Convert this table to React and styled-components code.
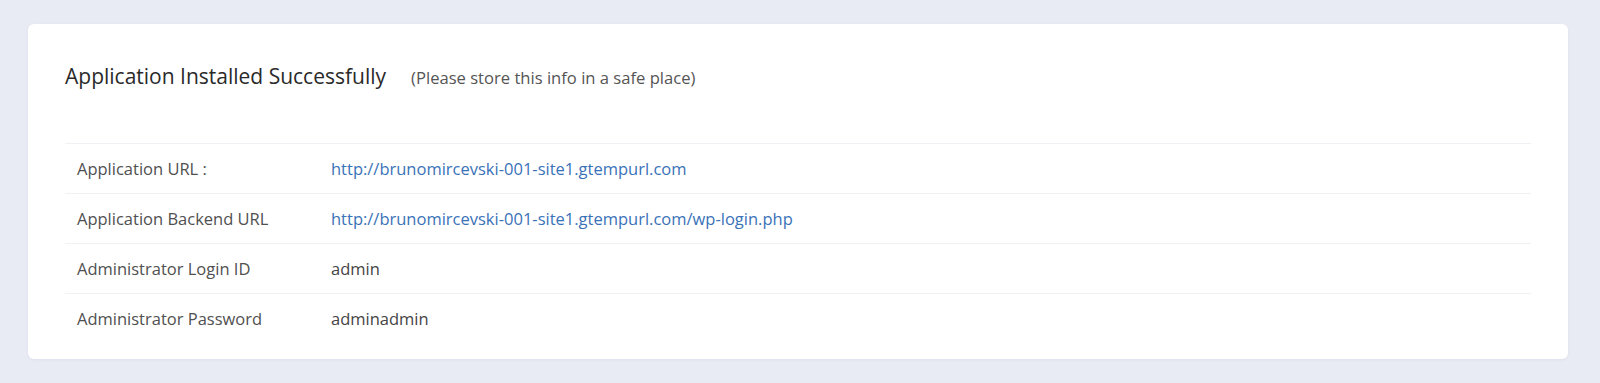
import React from 'react';
import styled, { createGlobalStyle } from 'styled-components';

const GlobalStyle = createGlobalStyle`
  html, body {
    margin: 0;
    padding: 0;
    background-color: #e9ebf4;
    font-family: 'Open Sans', 'Liberation Sans', sans-serif;
  }
`;

const Page = styled.div`
  padding: 24px 32px 24px 28px;
`;

const Card = styled.div`
  background-color: #fff;
  border-radius: 6px;
  padding: 38px 37px 16px 37px;
  box-shadow: 0 1px 3px rgba(40, 50, 100, 0.06);
`;

const Header = styled.div`
  display: flex;
  align-items: baseline;
  gap: 25px;
  height: 28px;
  margin-bottom: 53px;
`;

const Title = styled.h2`
  margin: 0;
  font-size: 21px;
  font-weight: 400;
  line-height: 28px;
  color: #2a2a2a;
`;

const Note = styled.span`
  font-size: 16.6px;
  color: #555;
`;

const Table = styled.div`
  display: flex;
  flex-direction: column;
`;

const Row = styled.div`
  display: grid;
  grid-template-columns: 266px 1fr;
  align-items: center;
  height: 49px;
  border-top: 1px solid #f0f1f4;
  font-size: 16.5px;
`;

const Label = styled.div`
  padding-left: 12px;
  color: #505050;
`;

const Value = styled.div`
  color: ${(p) => (p.$link ? '#3a72b8' : '#444')};
`;

const rows = [
  { label: 'Application URL :', value: 'http://brunomircevski-001-site1.gtempurl.com', link: true },
  { label: 'Application Backend URL', value: 'http://brunomircevski-001-site1.gtempurl.com/wp-login.php', link: true },
  { label: 'Administrator Login ID', value: 'admin' },
  { label: 'Administrator Password', value: 'adminadmin' },
];

function App() {
  return (
    <>
      <GlobalStyle />
      <Page>
        <Card>
          <Header>
            <Title>Application Installed Successfully</Title>
            <Note>(Please store this info in a safe place)</Note>
          </Header>
          <Table>
            {rows.map((r) => (
              <Row key={r.label}>
                <Label>{r.label}</Label>
                <Value $link={r.link}>{r.value}</Value>
              </Row>
            ))}
          </Table>
        </Card>
      </Page>
    </>
  );
}

export default App;
